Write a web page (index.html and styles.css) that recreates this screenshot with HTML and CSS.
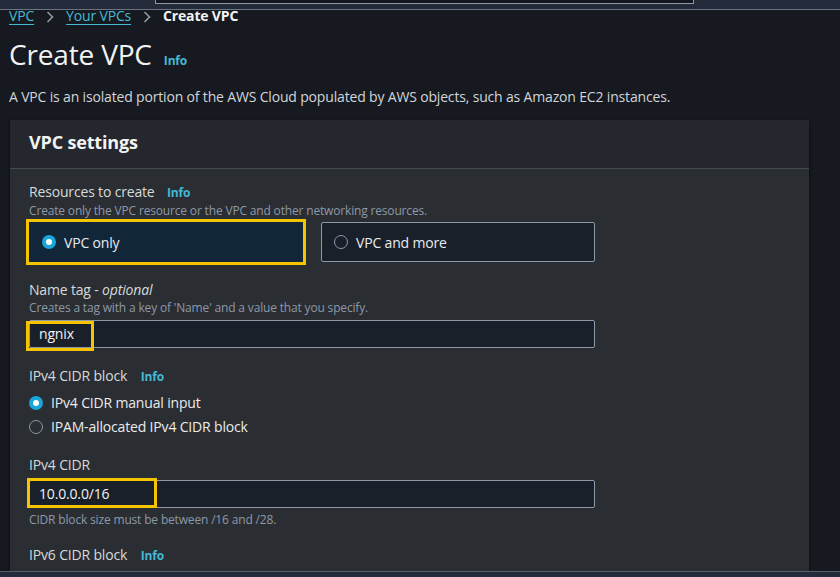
FILE: index.html
```html
<!DOCTYPE html>
<html lang="en">
<head>
<meta charset="utf-8">
<title>Create VPC</title>
<link rel="stylesheet" href="styles.css">
</head>
<body>
<div class="topbar"><div class="search"></div></div>
<main class="main">
  <nav class="crumbs">
    <a class="link" href="#">VPC</a>
    <span class="chev"><svg width="8" height="12" viewBox="0 0 8 12"><path d="M1.5 1l5 5-5 5" fill="none" stroke="#8d99a8" stroke-width="1.6"/></svg></span>
    <a class="link" href="#">Your VPCs</a>
    <span class="chev"><svg width="8" height="12" viewBox="0 0 8 12"><path d="M1.5 1l5 5-5 5" fill="none" stroke="#8d99a8" stroke-width="1.6"/></svg></span>
    <span class="current">Create VPC</span>
  </nav>
  <div class="title-row">
    <h1 class="title">Create VPC</h1>
    <span class="info info-title">Info</span>
  </div>
  <p class="intro">A VPC is an isolated portion of the AWS Cloud populated by AWS objects, such as Amazon EC2 instances.</p>

  <section class="panel">
    <header class="panel-head">VPC settings</header>
    <div class="panel-body">
      <div class="label label-first">Resources to create <span class="info info-res">Info</span></div>
      <div class="desc">Create only the VPC resource or the VPC and other networking resources.</div>
      <div class="tiles">
        <div class="tile tile-on"><span class="radio radio-on"></span><span>VPC only</span></div>
        <div class="tile"><span class="radio"></span><span>VPC and more</span></div>
      </div>

      <div class="label label-name">Name tag - <i>optional</i></div>
      <div class="desc">Creates a tag with a key of 'Name' and a value that you specify.</div>
      <div class="field">
        <div class="input">ngnix</div>
        <span class="mark mark-name"></span>
      </div>

      <div class="label label-gap">IPv4 CIDR block <span class="info info-block">Info</span></div>
      <div class="radios">
        <div class="opt"><span class="radio radio-on"></span><span>IPv4 CIDR manual input</span></div>
        <div class="opt"><span class="radio"></span><span>IPAM-allocated IPv4 CIDR block</span></div>
      </div>

      <div class="label label-cidr">IPv4 CIDR</div>
      <div class="field">
        <div class="input">10.0.0.0/16</div>
        <span class="mark mark-cidr"></span>
      </div>
      <div class="desc hint">CIDR block size must be between /16 and /28.</div>

      <div class="label label-v6">IPv6 CIDR block <span class="info info-block">Info</span></div>
    </div>
  </section>
</main>
<div class="footbar"></div>
</body>
</html>
```

FILE: styles.css
```css
* { box-sizing: border-box; }
html, body { margin: 0; padding: 0; }
body {
  width: 840px;
  height: 577px;
  overflow: hidden;
  display: flex;
  flex-direction: column;
  background: #16191f;
  color: #d1d5db;
  font-family: "Open Sans", "Noto Sans", sans-serif;
  font-size: 14px;
  letter-spacing: -0.012em;
}
.topbar {
  height: 10px;
  flex: none;
  background: #232b3a;
  border-bottom: 1px solid #6b7582;
  padding-left: 155px;
  position: relative;
  z-index: 0;
}
.search {
  width: 539px;
  height: 4px;
  background: #14181e;
  border: 1px solid #8d99a8;
  border-top: none;
}
.main {
  flex: 1;
  min-height: 0;
  padding-left: 9px;
}
.crumbs {
  display: flex;
  align-items: baseline;
  line-height: 20px;
  height: 20px;
  margin-top: -4px;
  position: relative;
  z-index: 1;
}
.link {
  color: #44b9d6;
  text-decoration: underline;
  text-underline-offset: 3px;
}
.chev {
  width: 32px;
  display: flex;
  justify-content: center;
  align-self: center;
  position: relative;
  top: 1px;
}
.current { color: #f2f3f3; font-weight: 700; }
.title-row {
  display: flex;
  align-items: baseline;
  margin-top: 10px;
  height: 36px;
}
.title {
  margin: 0;
  font-size: 28px;
  line-height: 36px;
  font-weight: 400;
  color: #f2f3f3;
}
.info {
  color: #44b9d6;
  font-weight: 700;
  font-size: 12px;
}
.info-title { margin-left: 12px; }
.intro {
  margin: 15px 0 0;
  line-height: 20px;
  color: #d1d5db;
}
.panel {
  margin: 13px 0 0 1px;
  width: 799px;
  background: #2a2d32;
  box-shadow: 0 1px 3px rgba(0,0,0,0.6);
}
.panel-head {
  height: 49px;
  padding: 10px 19px 0;
  font-size: 18px;
  line-height: 24px;
  font-weight: 700;
  color: #f2f3f3;
  background: #24272d;
  border-bottom: 1px solid #434951;
}
.panel-body {
  padding: 13px 19px 30px;
  width: 604px;
}
.label { line-height: 20px; color: #d5dbdb; }
.label i { font-style: italic; }
.info-res { margin-left: 9px; }
.info-block { margin-left: 10px; }
.desc {
  font-size: 12px;
  line-height: 15px;
  color: #8d99a8;
}
.tiles {
  margin-top: 4px;
  display: grid;
  grid-template-columns: 1fr 1fr;
  column-gap: 18px;
}
.tile {
  height: 40px;
  display: flex;
  align-items: center;
  gap: 8px;
  padding-left: 12px;
  background: #1a2029;
  border: 1px solid #8d99a8;
  border-radius: 2px;
  color: #e9ebed;
}
.tile-on {
  background: #12263a;
  border-color: #12263a;
  outline: 3px solid #f5c400;
  outline-offset: 0;
  border-radius: 0;
}
.radio {
  width: 14px;
  height: 14px;
  flex: none;
  border-radius: 50%;
  border: 1.5px solid #8d99a8;
  background: transparent;
}
.radio-on {
  border: 4px solid #1aa6d6;
  background: #ffffff;
}
.label-name { margin-top: 18px; }
.field {
  position: relative;
  margin-top: 5px;
}
.input {
  height: 28px;
  padding: 0 9px;
  line-height: 26px;
  background: #1a2029;
  border: 1px solid #8d99a8;
  border-radius: 2px;
  color: #f2f3f3;
}
.mark {
  position: absolute;
  border: 3px solid #f5c400;
}
.mark-name { left: -3px; top: 1px; width: 68px; height: 30px; }
.mark-cidr { left: -2px; top: -2px; width: 130px; height: 30px; }
.label-gap { margin-top: 18px; }
.radios { margin-top: 4px; }
.opt {
  height: 24px;
  display: flex;
  align-items: center;
  gap: 8px;
  line-height: 24px;
  color: #e9ebed;
}
.label-cidr { margin-top: 16px; }
.hint { margin-top: 4px; }
.label-v6 { margin-top: 18px; }
.footbar {
  height: 6px;
  flex: none;
  background: #232b3a;
  border-top: 1px solid #545e6b;
  position: relative;
  z-index: 2;
}
```
